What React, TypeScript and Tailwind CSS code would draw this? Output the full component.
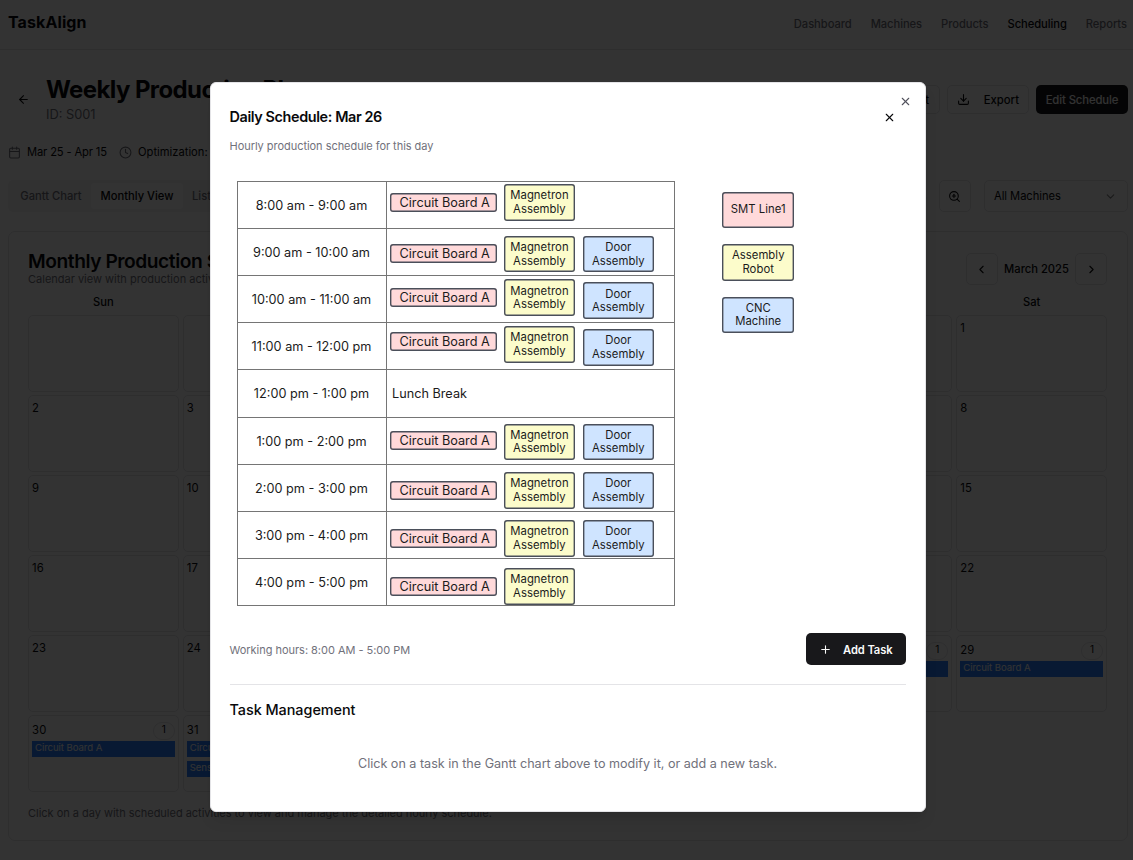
import { ArrowLeft, Calendar, ChevronDown, ChevronLeft, ChevronRight, Clock, Download, Plus, X, ZoomIn } from "lucide-react";

const chipTone = {
  red: "bg-[#ffd9da]",
  yellow: "bg-[#fcfccb]",
  blue: "bg-[#cfe4ff]",
};

const slots = [
  { time: "8:00 am - 9:00 am", a: "mt-[11px]", m: "mt-[2.5px]", d: "" },
  { time: "9:00 am - 10:00 am", a: "mt-[15.5px]", m: "mt-[7px]", d: "mt-[7px]" },
  { time: "10:00 am - 11:00 am", a: "mt-[12px]", m: "mt-[3.5px]", d: "mt-[6.5px]" },
  { time: "11:00 am - 12:00 pm", a: "mt-[9px]", m: "mt-[3px]", d: "mt-[6px]" },
  { time: "12:00 pm - 1:00 pm", a: "", m: "", d: "" },
  { time: "1:00 pm - 2:00 pm", a: "mt-[13px]", m: "mt-[6px]", d: "mt-[6px]" },
  { time: "2:00 pm - 3:00 pm", a: "mt-[16px]", m: "mt-[7.5px]", d: "mt-[7.5px]" },
  { time: "3:00 pm - 4:00 pm", a: "mt-[17px]", m: "mt-[8.3px]", d: "mt-[8.3px]" },
  { time: "4:00 pm - 5:00 pm", a: "mt-[17.7px]", m: "mt-[9.2px]", d: "" },
];

function Chip({ tone, lines, className = "" }: { tone: keyof typeof chipTone; lines: string[]; className?: string }) {
  return (
    <div className={`flex h-[36.5px] w-[71.5px] shrink-0 flex-col items-center justify-center rounded-[3px] pt-[1px] text-[11.3px] leading-[13.7px] tracking-[0.05px] text-[#1b1b1b] shadow-[inset_0_0_0_1.4px_#4a4f5a] ${chipTone[tone]} ${className}`}>
      {lines.map((l) => (
        <span key={l} className="whitespace-nowrap">{l}</span>
      ))}
    </div>
  );
}

const weekdays = ["Sun", "Mon", "Tue", "Wed", "Thu", "Fri", "Sat"];

const tasks: Record<number, string[]> = {
  28: ["Circuit Board A"],
  29: ["Circuit Board A"],
  30: ["Circuit Board A"],
  31: ["Circuit Board A", "Sensor Module"],
};

function Day({ day }: { day: number | null }) {
  const items = day ? tasks[day] ?? [] : [];
  const badge = items.length ? 1 : 0;
  return (
    <div className="h-[77px] rounded-[5px] border border-zinc-200 px-[3px] py-[4px] text-[11.3px]">
      {day && (
        <div className={`flex justify-between ${badge ? "h-[21px] items-center" : "h-[17px] items-center"}`}>
          <span className="tracking-[0.2px]">{day}</span>
          {badge > 0 && (
            <span className="flex h-[18px] w-[22px] items-center justify-center rounded-full border border-zinc-200 pb-[2px] text-[10px]">{badge}</span>
          )}
        </div>
      )}
      <div className="flex flex-col gap-[4px]">
        {items.map((t) => (
          <div key={t} className="h-[16px] truncate bg-blue-500 px-[3px] text-[9.6px] leading-[14px] tracking-[-0.07px] text-white">{t}</div>
        ))}
      </div>
    </div>
  );
}

function Page() {
  const cells: (number | null)[] = [null, null, null, null, null, null, ...Array.from({ length: 31 }, (_, i) => i + 1)];
  return (
    <div className="flex h-full flex-col">
      <header className="flex h-[50px] shrink-0 items-center justify-between border-b border-zinc-200 pr-[6px] pb-[3px] pl-[8px]">
        <div className="pb-[2px] text-[16px] font-bold tracking-[0.1px]">TaskAlign</div>
        <nav className="flex gap-[19px] pt-[3px] text-[11.2px] font-medium tracking-[-0.06px] text-zinc-500">
          <span>Dashboard</span>
          <span>Machines</span>
          <span>Products</span>
          <span className="text-zinc-950">Scheduling</span>
          <span>Reports</span>
        </nav>
      </header>
      <div className="flex h-[92px] shrink-0 items-center justify-between pr-[5px] pl-[17px]">
        <div className="flex items-center pt-[6px]">
          <ArrowLeft className="size-[13px]" />
          <div className="ml-[16px] pt-[3px]">
            <h1 className="text-[24px] leading-[28px] font-bold tracking-[-0.6px] whitespace-nowrap">Weekly Production Plan</h1>
            <p className="pt-[1px] text-[12.8px] leading-[20px] text-zinc-500">ID: S001</p>
          </div>
        </div>
        <div className="flex gap-[7px] pt-[7px] text-[11.3px] font-medium">
          <div className="flex h-[29px] w-[76px] items-center justify-end rounded-[5px] border border-zinc-200 pt-[2px] pr-[10px]">Print</div>
          <div className="flex h-[29px] w-[82px] items-center justify-between rounded-[5px] border border-zinc-200 px-[9px]">
            <Download className="size-[13px]" />
            <span className="pt-[2px]">Export</span>
          </div>
          <div className="flex h-[29px] w-[92px] items-center justify-center rounded-[5px] bg-zinc-900 pt-[2px] tracking-[-0.1px] text-zinc-50">Edit Schedule</div>
        </div>
      </div>
      <div className="flex h-[20px] shrink-0 items-center pl-[8px] text-[11.2px] tracking-[-0.15px]">
        <Calendar className="size-[13px] text-zinc-500" />
        <span className="ml-[6px] w-[80px] pt-[1px] whitespace-nowrap">Mar 25 - Apr 15</span>
        <Clock className="ml-[12px] size-[13px] text-zinc-500" />
        <span className="ml-[6px] pt-[1px] tracking-[0px]">Optimization: Balanced</span>
      </div>
      <div className="mt-[18px] flex h-[32px] shrink-0 items-center justify-between pr-[5px] pl-[8px] text-[11.2px]">
        <div className="flex h-[32px] items-center rounded-[5px] bg-zinc-100 px-[3px] font-medium text-zinc-500">
          <span className="w-[80px] pt-[1px] text-center">Gantt Chart</span>
          <span className="h-[26px] w-[92px] rounded-[3px] bg-white text-center leading-[27px] text-zinc-950">Monthly View</span>
          <span className="w-[80px] pt-[1px] pl-[9px]">List View</span>
        </div>
        <div className="flex items-center">
          <div className="mr-[12px] text-blue-500">100%</div>
          <div className="mr-[13px] flex size-[32px] items-center justify-center rounded-[5px] border border-zinc-200">
            <ZoomIn className="mr-[1px] size-[13px]" />
          </div>
          <div className="flex h-[32px] w-[144px] items-center justify-between rounded-[5px] border border-zinc-200 pr-[10px] pl-[9px]">
            <span className="pt-[1px] tracking-[-0.05px]">All Machines</span>
            <ChevronDown className="size-[13px] opacity-50" />
          </div>
        </div>
      </div>
      <section className="mt-[19px] mr-[5px] ml-[8px] h-[610px] shrink-0 rounded-[7px] border border-zinc-200 pt-[21px] pr-[20px] pl-[19px]">
        <div className="flex h-[32px] items-start justify-between">
          <div className="-mt-px">
            <h2 className="text-[19.2px] leading-[19px] font-semibold tracking-[-0.45px] whitespace-nowrap">Monthly Production Schedule</h2>
            <p className="text-[11px] leading-[16px] text-zinc-500">Calendar view with production activities</p>
          </div>
          <div className="flex items-center text-[11.2px] font-medium">
            <span className="flex size-[32px] items-center justify-center rounded-[5px] border border-zinc-200 pr-[2px]"><ChevronLeft className="size-[13px]" /></span>
            <span className="w-[77px] pt-[1px] text-center">March 2025</span>
            <span className="flex size-[32px] items-center justify-center rounded-[5px] border border-zinc-200"><ChevronRight className="size-[13px]" /></span>
          </div>
        </div>
        <div className="mt-[7px] grid h-[23px] grid-cols-7 gap-x-[4px] text-center text-[11.2px] leading-[20px] font-medium">
          {weekdays.map((w) => (<span key={w}>{w}</span>))}
        </div>
        <div className="grid grid-cols-7 gap-x-[4px] gap-y-[3px]">
          {cells.map((d, i) => (<Day key={i} day={d} />))}
        </div>
        <p className="mt-[13px] text-[11px] leading-[16px] tracking-[-0.02px] text-zinc-500">Click on a day with scheduled activities to view and manage the detailed hourly schedule.</p>
      </section>
    </div>
  );
}

function DailyDialog() {
  return (
    <div className="relative h-[730px] w-[716px] rounded-[6px] border border-zinc-200 bg-white px-[19px] shadow-lg">
      <X className="absolute top-[12px] right-[12.5px] size-[13px] text-zinc-600" />
      <div className="flex items-center justify-between pt-[24.5px]">
        <h2 className="text-[14.4px] leading-[20px] font-semibold tracking-[-0.38px]">Daily Schedule: Mar 26</h2>
        <X className="mr-[9.5px] size-[13px]" />
      </div>
      <p className="mt-[11px] text-[11px] leading-[16px] tracking-[-0.04px] text-zinc-500">Hourly production schedule for this day</p>
      <div className="mt-[26.6px] ml-[7px] flex items-start">
        <div className="w-[438.4px] border-[1px] border-b-0 border-[#757575] bg-white">
          {slots.map((s) => (
            <div key={s.time} className="flex h-[47.2px] border-b border-[#757575]">
              <div className="flex w-[149px] shrink-0 items-center justify-center border-r border-[#757575] pt-px text-[12.7px] text-[#1b1b1b]">{s.time}</div>
              {s.a ? (
                <div className="flex items-start pl-[3.5px]">
                  <div className={`h-[19px] w-[106.5px] rounded-[3px] pl-[9.5px] text-[12.7px] leading-[20.5px] whitespace-nowrap text-[#1b1b1b] shadow-[inset_0_0_0_1.4px_#4a4f5a] ${chipTone.red} ${s.a}`}>Circuit Board A</div>
                  <Chip tone="yellow" lines={["Magnetron", "Assembly"]} className={`ml-[7.2px] ${s.m}`} />
                  {s.d && <Chip tone="blue" lines={["Door", "Assembly"]} className={`ml-[7.4px] ${s.d}`} />}
                </div>
              ) : (
                <div className="flex items-center pt-px pl-[5.5px] text-[12.7px] text-[#1b1b1b]">Lunch Break</div>
              )}
            </div>
          ))}
        </div>
        <div className="mt-[11px] ml-[47.6px] flex flex-col gap-[16px]">
          <Chip tone="red" lines={["SMT Line1"]} />
          <Chip tone="yellow" lines={["Assembly", "Robot"]} />
          <Chip tone="blue" lines={["CNC", "Machine"]} />
        </div>
      </div>
      <div className="mt-[27.2px] flex h-[32px] items-center justify-between">
        <span className="pt-[2px] text-[11px] tracking-[-0.03px] text-zinc-500">Working hours: 8:00 AM - 5:00 PM</span>
        <div className="flex h-[32px] w-[100px] items-center justify-between rounded-[5px] bg-zinc-900 pr-[13px] pl-[13px] text-[11.2px] font-semibold tracking-[-0.1px] text-zinc-50">
          <Plus className="size-[13px]" />
          <span className="pt-[2px]">Add Task</span>
        </div>
      </div>
      <div className="mt-[19px] border-t border-zinc-200 pt-[13.7px]">
        <h3 className="text-[14.4px] leading-[22px] font-medium tracking-[-0.03px]">Task Management</h3>
        <p className="mt-[33px] text-center text-[12.6px] leading-[20px] tracking-[-0.01px] text-zinc-500">Click on a task in the Gantt chart above to modify it, or add a new task.</p>
      </div>
    </div>
  );
}

export default function App() {
  return (
    <div className="relative h-[860px] w-[1133px] overflow-hidden bg-white font-['Inter',sans-serif] text-zinc-950">
      <Page />
      <div className="absolute inset-0 flex justify-start bg-black/80 pt-[81.5px] pl-[209.5px]">
        <DailyDialog />
      </div>
    </div>
  );
}
